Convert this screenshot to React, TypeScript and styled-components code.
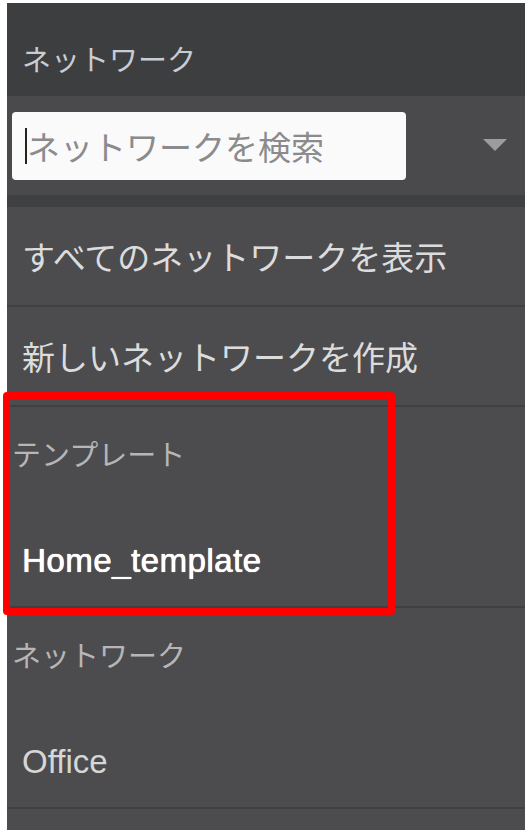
import React from 'react';
import styled, { createGlobalStyle } from 'styled-components';

const GlobalStyle = createGlobalStyle`
  html, body {
    margin: 0;
    padding: 0;
    background: #ffffff;
  }
  body {
    font-family: "Noto Sans CJK JP", "Liberation Sans", sans-serif;
  }
`;

const App: React.FC = () => {
  return (
    <>
      <GlobalStyle />
      <Panel>
        <Header>ネットワーク</Header>
        <SearchRow>
          <SearchBox>
            <Caret />
            <Placeholder>ネットワークを検索</Placeholder>
          </SearchBox>
          <Arrow />
        </SearchRow>
        <Divider />
        <MenuItem>すべてのネットワークを表示</MenuItem>
        <MenuItem>新しいネットワークを作成</MenuItem>
        <Group>
          <GroupLabel>テンプレート</GroupLabel>
          <GroupItem bright>Home_template</GroupItem>
        </Group>
        <Group>
          <GroupLabel>ネットワーク</GroupLabel>
          <GroupItem>Office</GroupItem>
        </Group>
        <Highlight />
      </Panel>
    </>
  );
};

const Panel = styled.div`
  position: relative;
  margin: 3px 0 0 7px;
  min-height: 827px;
  background: #4c4c4e;
`;

const Header = styled.div`
  height: 93px;
  display: flex;
  align-items: center;
  padding: 0 15px;
  background: #3d3e40;
  color: #c8ccd3;
  font-size: 29px;
  line-height: 1;
  padding-top: 18px;
  box-sizing: border-box;
`;

const SearchRow = styled.div`
  height: 99px;
  display: flex;
  align-items: flex-start;
  padding: 16px 18px 0 5px;
  box-sizing: border-box;
  background: #4a4a4c;
`;

const SearchBox = styled.div`
  width: 394px;
  height: 68px;
  display: flex;
  align-items: center;
  padding-left: 13px;
  box-sizing: border-box;
  background: #fafafa;
  border-radius: 4px;
  position: relative;
`;

const Caret = styled.span`
  width: 2px;
  height: 36px;
  background: #222;
  position: absolute;
  left: 13px;
  top: 16px;
`;

const Placeholder = styled.span`
  color: #8b8b8d;
  font-size: 33px;
  line-height: 1;
  margin-left: 2px;
`;

const Arrow = styled.span`
  margin-left: auto;
  margin-top: 27px;
  width: 0;
  height: 0;
  border-left: 12px solid transparent;
  border-right: 12px solid transparent;
  border-top: 12px solid #9c9c9e;
`;

const Divider = styled.div`
  height: 12px;
  background: #3f4042;
`;

const MenuItem = styled.div`
  height: 100px;
  display: flex;
  align-items: center;
  padding: 0 15px;
  box-sizing: border-box;
  border-bottom: 2px solid #3f4042;
  color: #dcdcdc;
  font-size: 33px;
  line-height: 1;
`;

const Group = styled.div`
  border-bottom: 2px solid #3f4042;
  height: 201px;
  box-sizing: border-box;
  display: flex;
  flex-direction: column;
`;

const GroupLabel = styled.div`
  height: 92px;
  display: flex;
  align-items: center;
  padding: 0 5px;
  color: #b6b6b8;
  font-size: 29px;
  line-height: 1;
`;

const GroupItem = styled.div<{ bright?: boolean }>`
  padding: 45px 15px 0;
  font-family: "Liberation Sans", Arial, sans-serif;
  font-size: 33px;
  line-height: 1;
  color: ${(p) => (p.bright ? '#ffffff' : '#d6d6d6')};
  letter-spacing: ${(p) => (p.bright ? '0.5px' : '0')};
  text-shadow: ${(p) => (p.bright ? '0 0 1px #ffffff, 0.4px 0 0 #ffffff' : 'none')};
`;

const Highlight = styled.div`
  position: absolute;
  left: -4px;
  top: 389px;
  width: 392px;
  height: 223px;
  box-sizing: border-box;
  border: 7px solid #ff0000;
  border-radius: 4px;
  pointer-events: none;
`;

export default App;
